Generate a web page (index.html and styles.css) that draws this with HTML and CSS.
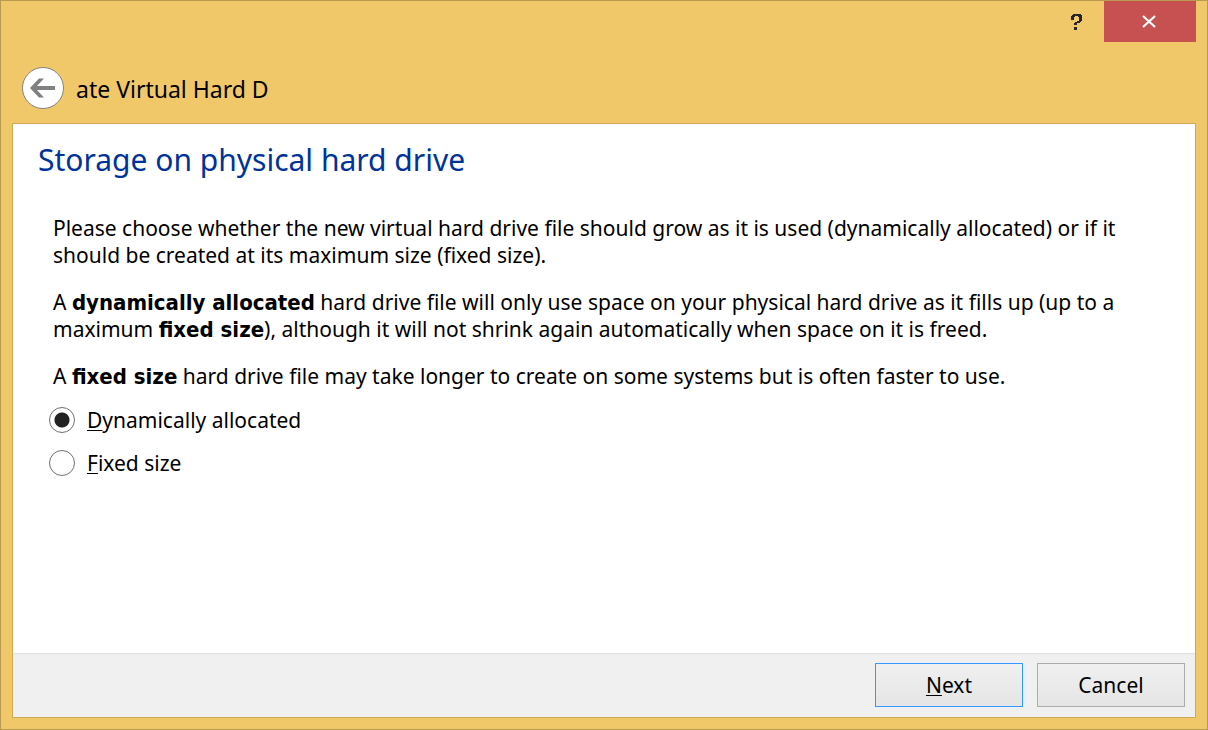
FILE: index.html
```html
<!DOCTYPE html>
<html lang="en">
<head>
<meta charset="utf-8">
<title>Create Virtual Hard Drive</title>
<link rel="stylesheet" href="styles.css">
</head>
<body>
<form class="window">
  <header class="titlebar">
    <button class="help" type="button" aria-label="Help">
      <svg width="11" height="16" viewBox="0 0 11 16" shape-rendering="crispEdges" fill="#262626"><path d="M2 0h8v1h1v6h-1v1H9v1H6v2H3V9h1V8h2V7h2V3H7V2H4v1H3v3H0V2h1V1h1zM3 13h3v3H3z"/></svg>
    </button>
    <button class="close" type="button" aria-label="Close">
      <svg width="16" height="14" viewBox="0 0 16 14"><path d="M1 1l12 11M13 1L1 12" fill="none" stroke="#fff" stroke-width="2.2"/></svg>
    </button>
  </header>
  <div class="nav">
    <button class="back" type="button" aria-label="Back">
      <svg width="26" height="20" viewBox="0 0 26 20"><path d="M0 10L9 0.500h5L7 8h18v4H7l7 7.500H9z" fill="#808080"/></svg>
    </button>
    <span class="caption">ate Virtual Hard D</span>
  </div>
  <main class="page">
    <h1 class="heading">Storage on physical hard drive</h1>
    <div class="content">
      <p class="text">Please choose whether the new virtual hard drive file should grow as it is used (dynamically allocated) or if it should be created at its maximum size (fixed size).</p>
      <p class="text">A <b>dynamically allocated</b> hard drive file will only use space on your physical hard drive as it fills up (up to a maximum <b>fixed size</b>), although it will not shrink again automatically when space on it is freed.</p>
      <p class="text">A <b>fixed size</b> hard drive file may take longer to create on some systems but is often faster to use.</p>
    </div>
    <div class="options">
      <label class="option"><input class="radio" type="radio" name="variant" checked><span><u>D</u>ynamically allocated</span></label>
      <label class="option"><input class="radio" type="radio" name="variant"><span><u>F</u>ixed size</span></label>
    </div>
    <footer class="footer">
      <button class="button primary" type="button"><span><u>N</u>ext</span></button>
      <button class="button" type="button">Cancel</button>
    </footer>
  </main>
</form>
</body>
</html>
```
FILE: styles.css
```css
* { box-sizing: border-box; }
body {
  margin: 0;
  font-family: "Noto Sans", sans-serif;
  font-size: 21px;
  line-height: 27px;
  color: #000;
}
button { padding: 0; font: inherit; color: inherit; }
u { text-decoration-thickness: 1px; text-underline-offset: 2px; text-decoration-skip-ink: none; }
b {
  font-family: "DejaVu Sans Condensed", "DejaVu Sans", sans-serif;
  font-size: 22px;
  line-height: 22px;
}
.window {
  display: flex;
  flex-direction: column;
  min-height: 100vh;
  padding: 0 11px 11px;
  border: 1px solid #b89a50;
  background: #f0c869;
}
.titlebar { display: flex; justify-content: flex-end; height: 41px; }
.help, .close {
  display: flex;
  align-items: center;
  justify-content: center;
  border: 0;
}
.help { width: 56px; background: transparent; }
.close { width: 92px; background: #c75050; }
.nav { display: flex; align-items: center; gap: 12px; padding: 25px 10px 14px; }
.back {
  display: flex;
  align-items: center;
  justify-content: center;
  width: 42px;
  height: 42px;
  border: 1px solid #85847f;
  border-radius: 50%;
  background: #fff;
}
.caption { padding-top: 2px; font-size: 23px; line-height: 32px; }
.page {
  flex: 1;
  display: flex;
  flex-direction: column;
  border: 1px solid #cfaa55;
  background: #fff;
}
.heading {
  margin: 0;
  padding: 14px 25px 0;
  font-size: 30px;
  font-weight: 400;
  line-height: 44px;
  color: #003399;
}
.content { display: flex; flex-direction: column; gap: 20px; padding: 33px 40px 0; }
.text { margin: 0; }
.options {
  flex: 1;
  display: flex;
  flex-direction: column;
  align-items: flex-start;
  gap: 16px;
  padding: 17px 36px;
}
.option { display: flex; align-items: flex-start; gap: 12px; }
.radio {
  appearance: none;
  width: 26px;
  height: 26px;
  margin: 0;
  border: 1px solid #707070;
  border-radius: 50%;
  background: #fff;
}
.radio:checked { background: radial-gradient(circle, #222 7px, #fff 8px); }
.footer {
  display: flex;
  justify-content: flex-end;
  gap: 14px;
  padding: 9px 10px 10px;
  border-top: 1px solid #dfdfdf;
  background: #f0f0f0;
}
.button {
  width: 148px;
  height: 44px;
  border: 1px solid #acacac;
  background: linear-gradient(#f0f0f0, #e5e5e5);
}
.primary { border-color: #3399ff; }
```
